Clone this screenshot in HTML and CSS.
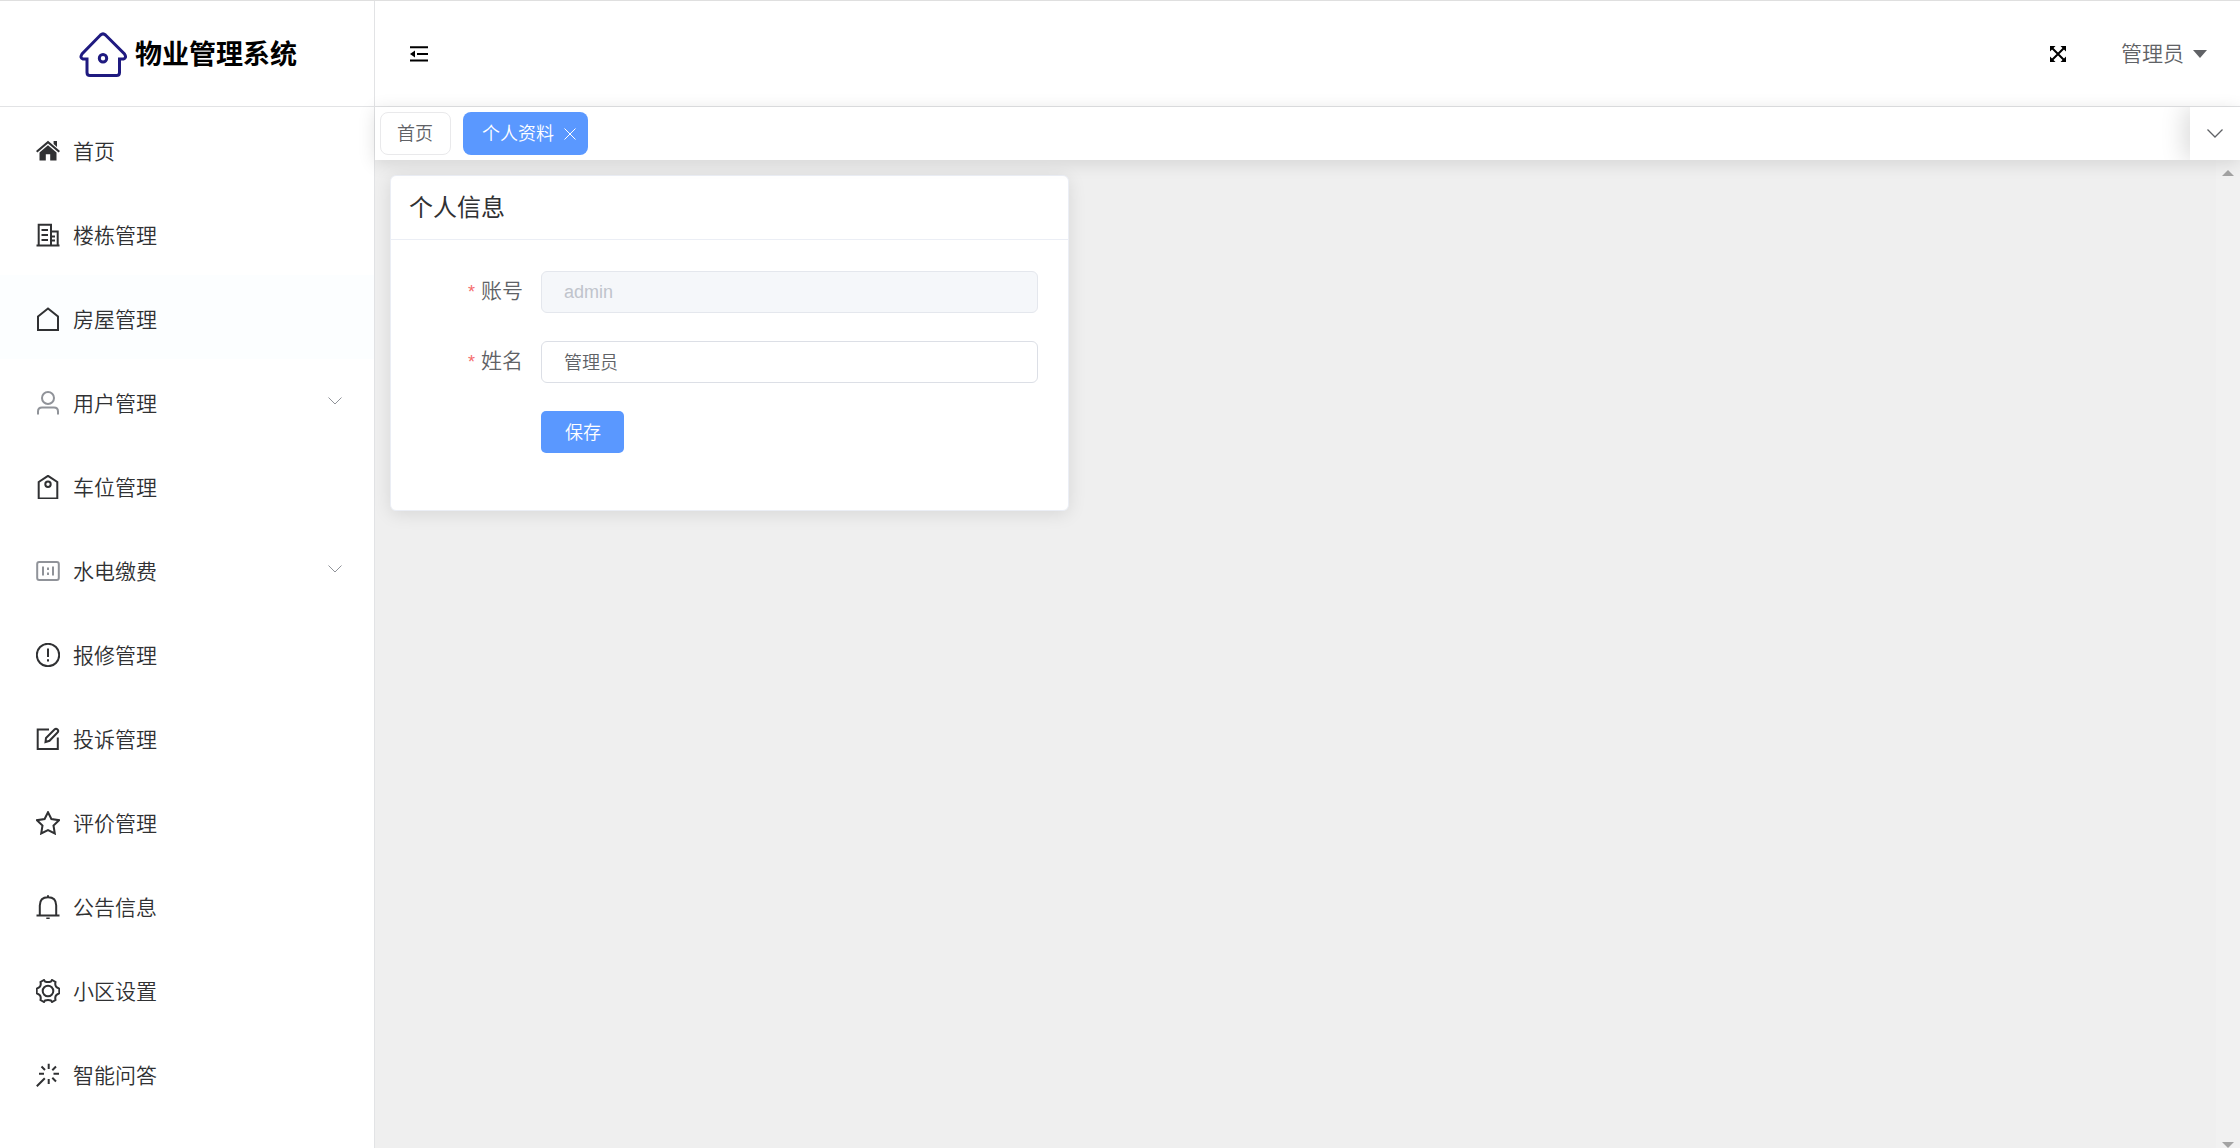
FILE: index.html
```html
<!DOCTYPE html>
<html lang="zh-CN">
<head>
<meta charset="utf-8">
<meta name="viewport" content="width=device-width, initial-scale=1">
<title>物业管理系统</title>
<link rel="stylesheet" href="styles.css">
</head>
<body>
<div class="app">
  <aside class="sidebar">
    <div class="brand">
      <svg class="brand-logo" viewBox="0 0 48 46" aria-hidden="true"><path d="M21.500 3 Q24 0.800 26.500 3 L45.500 22 Q48 26 44.500 27 H40.500 V40.500 Q40.500 43.500 37.500 43.500 H11 Q8 43.500 8 40.500 V27 H4 Q0.500 26 3 22 Z"/><circle cx="24" cy="26.300" r="3.700"/></svg>
      <h1 class="brand-name">物业管理系统</h1>
    </div>
    <nav class="menu">
      <a class="menu-item" href="#"><svg class="icon solid" viewBox="0 0 24 24"><path d="M12 1.800 L24 12 L22.600 13.600 L12 4.600 L1.400 13.600 L0 12 Z M17.600 2 H21 V8 L17.600 5.100 Z M12 6.300 L20.500 13.500 V21.500 H14.200 V15.300 H9.800 V21.500 H3.500 V13.500 Z"/></svg><span>首页</span></a>
      <a class="menu-item" href="#"><svg class="icon" viewBox="0 0 24 24"><path d="M0.500 22.500 H23.500 M2.700 22.500 V1.700 H15 V22.500 M15 8.500 H21.700 V22.500 M5.500 7 H12 M5.500 12 H12 M5.500 17 H12 M15 13.500 H19 M15 17.500 H19"/></svg><span>楼栋管理</span></a>
      <a class="menu-item is-hover" href="#"><svg class="icon" viewBox="0 0 24 24"><path d="M2 9.500 L12 1.500 L22 9.500 V23 H2 Z"/></svg><span>房屋管理</span></a>
      <a class="menu-item" href="#"><svg class="icon muted" viewBox="0 0 24 24"><circle cx="12" cy="7" r="6"/><path d="M2 23.500 V20.500 Q2 16.500 6 16.500 H18 Q22 16.500 22 20.500 V23.500"/></svg><span>用户管理</span><svg class="arrow" viewBox="0 0 14 8"><path d="M0.500 0.500 L7 7 L13.500 0.500"/></svg></a>
      <a class="menu-item" href="#"><svg class="icon" viewBox="0 0 24 24"><path d="M2.700 7 L12 0.800 L21.300 7 V23.500 H2.700 Z"/><circle cx="12" cy="9.300" r="2.700"/></svg><span>车位管理</span></a>
      <a class="menu-item" href="#"><svg class="icon muted" viewBox="0 0 24 24"><rect x="1.200" y="3" width="21.600" height="18" rx="2"/><path d="M7 7.500 V16.500 M17 7.500 V16.500 M12 8.500 V11 M12 13.500 V16"/></svg><span>水电缴费</span><svg class="arrow" viewBox="0 0 14 8"><path d="M0.500 0.500 L7 7 L13.500 0.500"/></svg></a>
      <a class="menu-item" href="#"><svg class="icon" viewBox="0 0 24 24"><circle cx="12" cy="12" r="11.200"/><path d="M12 5.500 V14 M12 16.300 V18.500"/></svg><span>报修管理</span></a>
      <a class="menu-item" href="#"><svg class="icon" viewBox="0 0 24 24"><path d="M13 2.500 H1.700 V22 H21.800 V10.500 M9.500 15 L10 11 L18.500 2.500 Q20 1 21.500 2.500 Q23 4 21.500 5.500 L13.500 13.800 Z"/></svg><span>投诉管理</span></a>
      <a class="menu-item" href="#"><svg class="icon" viewBox="0 0 24 24"><path d="M12 1.200 L15.400 8 L23 9.200 L17.500 14.500 L18.800 22.500 L12 19.200 L5.200 22.500 L6.500 14.500 L1 9.200 L8.600 8 Z"/></svg><span>评价管理</span></a>
      <a class="menu-item" href="#"><svg class="icon" viewBox="0 0 24 24"><path d="M0.500 20.500 H23.500 M3.800 20.500 V10.500 Q3.800 2.200 12 2.200 Q20.200 2.200 20.200 10.500 V20.500 M12 0.300 V2.200 M10.300 23.400 H13.700"/></svg><span>公告信息</span></a>
      <a class="menu-item" href="#"><svg class="icon" viewBox="0 0 24 24"><path d="M9 2.500 Q12 3.700 15 2.500 L16 1 L19.500 3 L19.200 5 Q19.500 8.300 22 9 L23.300 9.800 V14.200 L22 15 Q19.500 15.700 19.200 19 L19.500 21 L16 23 L15 21.500 Q12 20.300 9 21.500 L8 23 L4.500 21 L4.800 19 Q4.500 15.700 2 15 L0.700 14.200 V9.800 L2 9 Q4.500 8.300 4.800 5 L4.500 3 L8 1 Z"/><circle cx="12" cy="12" r="5.300"/></svg><span>小区设置</span></a>
      <a class="menu-item" href="#"><svg class="icon" viewBox="0 0 24 24"><path d="M0.800 23.200 L8.800 15.200 M12.700 0.700 V6 M12.700 16 V21 M3 10.700 H8 M17.500 10.700 H23 M5.500 3.500 L9 7 M20 3.500 L16.300 7.200 M16.300 14.800 L20 18.500"/></svg><span>智能问答</span></a>
    </nav>
  </aside>
  <div class="body">
    <header class="topbar">
      <button class="icon-button" type="button" aria-label="收起菜单"><svg class="fold-icon" viewBox="0 0 20 18"><path d="M1 2.200 H19 M8 9 H19 M1 15.500 H19"/><path class="fill" d="M1 9 L6 5.500 V12.500 Z"/></svg></button>
      <div class="topbar-right">
        <button class="icon-button" type="button" aria-label="全屏"><svg class="full-icon" viewBox="0 0 18 18"><path d="M2 2 L16 16 M16 2 L2 16"/><path class="fill" d="M1 1 H6.500 L1 6.500 Z M17 1 V6.500 L11.500 1 Z M1 17 V11.500 L6.500 17 Z M17 17 H11.500 L17 11.500 Z"/></svg></button>
        <button class="user-button" type="button"><span>管理员</span><svg class="caret" viewBox="0 0 14 8"><path d="M0 0 H14 L7 8 Z"/></svg></button>
      </div>
    </header>
    <div class="tabs">
      <div class="tab-list">
        <button class="tab" type="button"><span>首页</span></button>
        <button class="tab is-active" type="button"><span>个人资料</span><svg class="close" viewBox="0 0 12 12"><path d="M0.500 0.500 L11.500 11.500 M11.500 0.500 L0.500 11.500"/></svg></button>
      </div>
      <button class="tab-more" type="button" aria-label="更多"><svg viewBox="0 0 16 9"><path d="M0.500 0.500 L8 8 L15.500 0.500"/></svg></button>
    </div>
    <div class="content">
      <main class="page">
        <section class="card">
          <h2 class="card-title">个人信息</h2>
          <form class="form">
            <div class="field">
              <label class="label" for="account">账号</label>
              <input class="input" id="account" type="text" value="admin" disabled>
            </div>
            <div class="field">
              <label class="label" for="name">姓名</label>
              <input class="input" id="name" type="text" value="管理员">
            </div>
            <div class="field">
              <button class="save" type="button">保存</button>
            </div>
          </form>
        </section>
      </main>
      <div class="scroll-track" aria-hidden="true">
        <svg viewBox="0 0 12 6"><path d="M0 6 L6 0 L12 6 Z"/></svg>
        <svg viewBox="0 0 12 6"><path d="M0 0 L6 6 L12 0 Z"/></svg>
      </div>
    </div>
  </div>
</div>
</body>
</html>
```
FILE: styles.css
```css
* { box-sizing: border-box; }

body {
  margin: 0;
  color: #303133;
  background: #fff;
  font-family: "Liberation Sans", "Noto Sans CJK SC", sans-serif;
  font-weight: 350;
}

h1, h2 { margin: 0; }

button, input { font: inherit; }

button {
  padding: 0;
  border: 0;
  background: none;
  color: inherit;
  cursor: pointer;
}

svg {
  display: block;
  flex: none;
  fill: none;
  stroke: currentColor;
}

.app {
  display: grid;
  grid-template-columns: 375px 1fr;
  min-height: 100vh;
  border-top: 1px solid #dfdfdf;
}

.sidebar { border-right: 1px solid #e2e3e5; }

.brand {
  display: flex;
  align-items: center;
  justify-content: center;
  gap: 8px;
  height: 106px;
  padding: 2px 0 0 2px;
  border-bottom: 1px solid #e2e3e5;
}

.brand-logo {
  width: 48px;
  height: 46px;
  color: #1f1a80;
  stroke-width: 3;
}

.brand-name {
  color: #000;
  font-size: 27px;
  line-height: 40px;
  font-weight: 700;
}

.menu-item {
  display: flex;
  align-items: center;
  gap: 13px;
  height: 84px;
  padding: 4px 30px 0 36px;
  color: #303133;
  font-size: 21px;
  text-decoration: none;
}

.menu-item span,
.user-button span,
.tab span { padding-bottom: 3px; }

.menu-item.is-hover { background: #fcfeff; }

.icon {
  width: 24px;
  height: 24px;
  stroke-width: 2;
}

.icon.solid { fill: currentColor; stroke: none; }

.icon.muted { color: #909399; }

.arrow {
  width: 14px;
  height: 8px;
  margin: 0 2px 4px auto;
  color: #909399;
}

.body {
  display: flex;
  flex-direction: column;
  min-width: 0;
}

.topbar {
  display: flex;
  align-items: center;
  justify-content: space-between;
  height: 106px;
  padding: 0 33px 0 34px;
  border-bottom: 1px solid #e2e3e5;
}

.topbar-right {
  display: flex;
  align-items: center;
  gap: 54px;
}

.icon-button { color: #000; }

.fold-icon { width: 20px; height: 18px; stroke-width: 2; }

.full-icon { width: 18px; height: 18px; stroke-width: 2; }

.fill { fill: currentColor; stroke: none; }

.user-button {
  display: flex;
  align-items: center;
  gap: 9px;
  color: #606266;
  font-size: 21px;
}

.caret { width: 14px; height: 8px; fill: currentColor; stroke: none; }

.tabs {
  position: relative;
  display: flex;
  justify-content: space-between;
  height: 53px;
  background: #fff;
  box-shadow: 0 3px 18px rgba(0, 0, 0, .12);
}

.tab-list {
  display: flex;
  align-items: center;
  gap: 12px;
  padding-left: 5px;
}

.tab {
  display: flex;
  align-items: center;
  gap: 10px;
  height: 43px;
  padding: 0 17px 0 16px;
  border: 1px solid #e9e9eb;
  border-radius: 8px;
  color: #606266;
  font-size: 18px;
}

.tab.is-active {
  padding: 0 12px 0 19px;
  border: 0;
  background: #5a98ff;
  color: #fff;
}

.close { width: 12px; height: 12px; }

.tab-more {
  display: grid;
  place-items: center;
  width: 50px;
  color: #606266;
  box-shadow: -6px 0 24px rgba(0, 0, 0, .14);
  clip-path: inset(0 0 0 -36px);
}

.tab-more svg { width: 16px; height: 9px; stroke-width: 1.3; }

.content {
  display: flex;
  flex: 1;
  background: #efefef;
}

.page { flex: 1; padding: 15px; }

.scroll-track {
  display: flex;
  flex-direction: column;
  justify-content: space-between;
  align-items: center;
  width: 24px;
  padding-top: 10px;
  background: #f1f1f1;
  color: #a3a3a3;
}

.scroll-track svg { width: 12px; height: 6px; fill: currentColor; stroke: none; }

.card {
  max-width: 679px;
  border: 1px solid #ebeef5;
  border-radius: 6px;
  background: #fff;
  box-shadow: 0 3px 18px rgba(0, 0, 0, .1);
}

.card-title {
  height: 64px;
  padding: 0 18px;
  border-bottom: 1px solid #ebeef5;
  font-size: 24px;
  line-height: 64px;
  font-weight: 400;
}

.form {
  display: flex;
  flex-direction: column;
  gap: 28px;
  padding: 31px 30px 57px;
}

.field {
  display: grid;
  grid-template-columns: 120px 1fr;
}

.label {
  padding-right: 18px;
  color: #606266;
  font-size: 21px;
  line-height: 40px;
  text-align: right;
}

.label::before {
  content: "*";
  margin-right: 6px;
  color: #f56c6c;
  font-size: 18px;
}

.input {
  width: 100%;
  height: 42px;
  padding: 0 22px 2px;
  border: 1px solid #dcdfe6;
  border-radius: 6px;
  background: #fff;
  color: #606266;
  font-size: 18px;
}

.input:disabled {
  padding-bottom: 0;
  border-color: #e4e7ed;
  background: #f5f7fa;
  color: #c0c4cc;
}

.save {
  grid-column: 2;
  justify-self: start;
  height: 42px;
  padding: 0 23px 3px 24px;
  border-radius: 5px;
  background: #5a98ff;
  color: #fff;
  font-size: 18px;
}
```
